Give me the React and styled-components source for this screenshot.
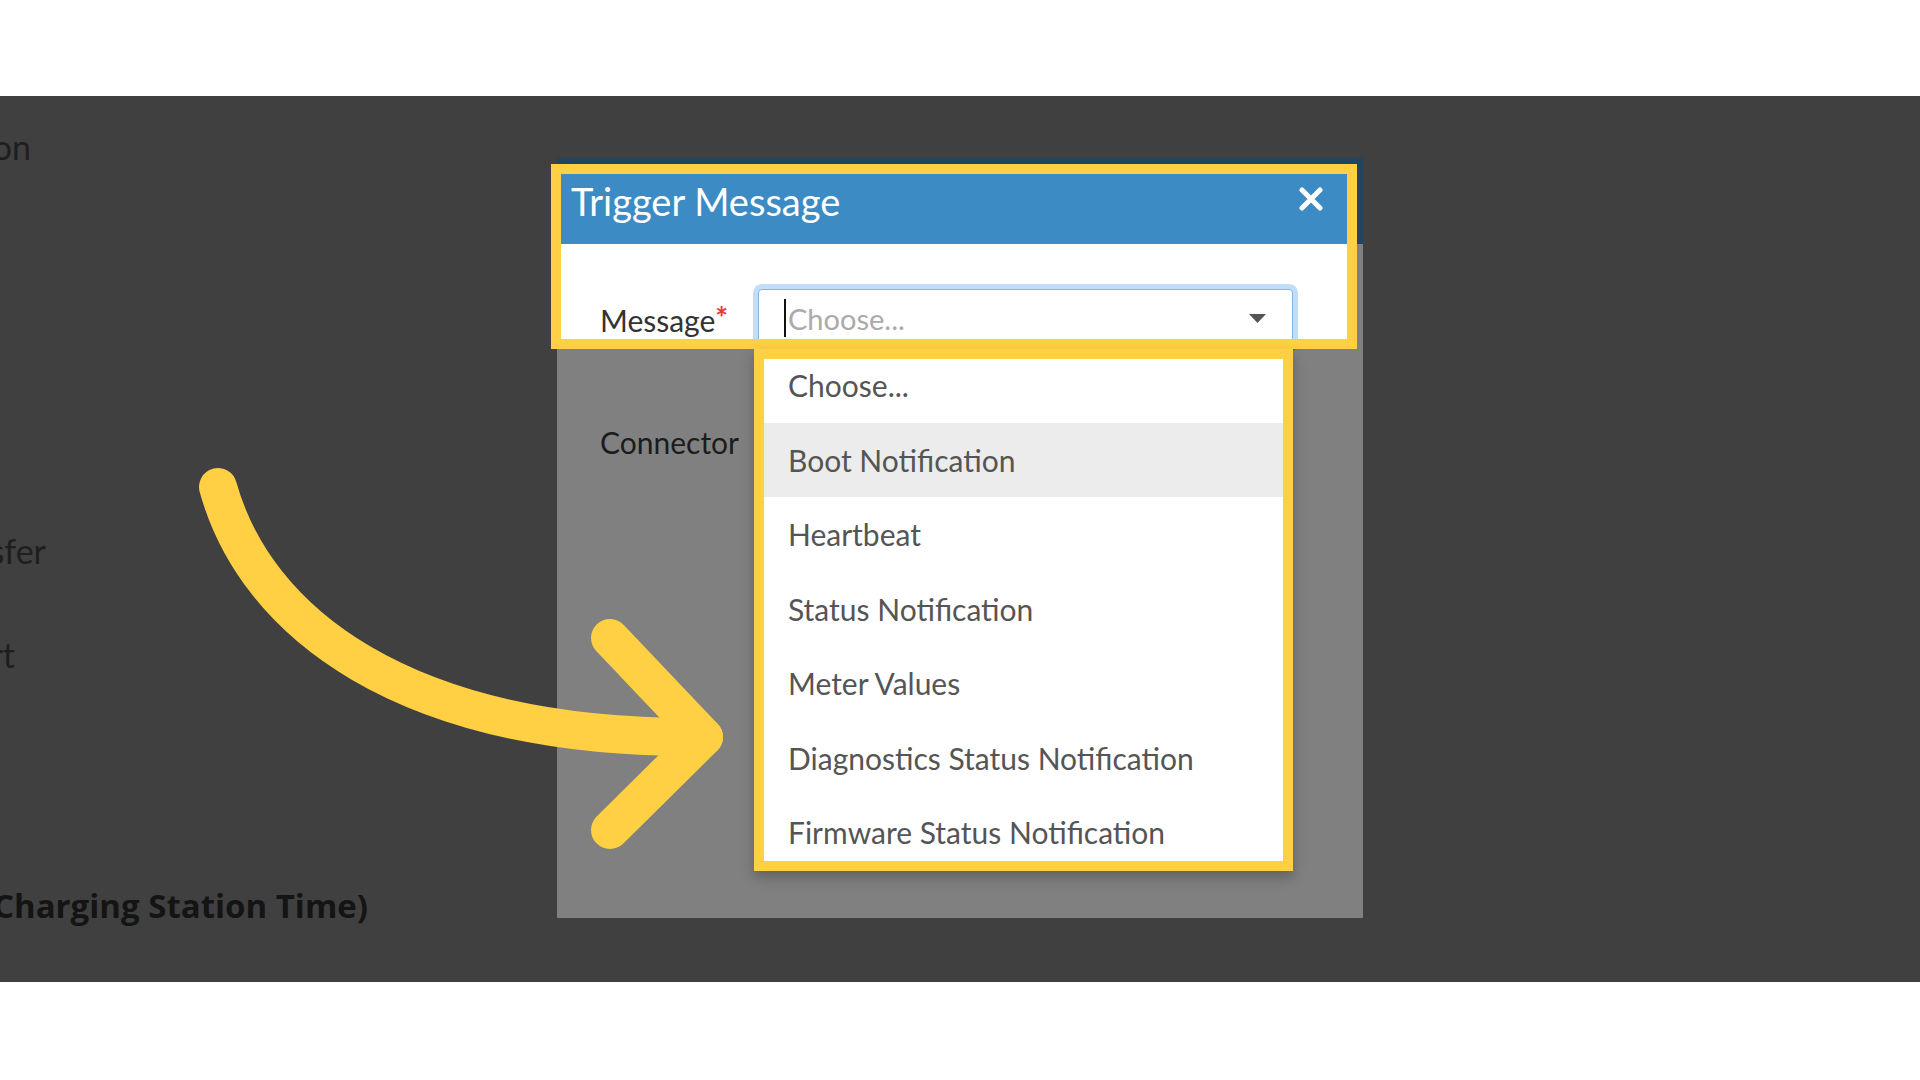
import React from "react";
import styled, { createGlobalStyle } from "styled-components";

const GlobalStyle = createGlobalStyle`
  html, body {
    margin: 0;
    padding: 0;
    background: #fff;
    overflow: hidden;
  }
  body {
    font-family: Lato, "Open Sans", sans-serif;
  }
`;

const Page = styled.div`
  width: 1920px;
  height: 1080px;
  padding-top: 96px;
  box-sizing: border-box;
  background: #fff;
`;

const Stage = styled.div`
  position: relative;
  height: 886px;
  background: #404040;
  overflow: hidden;
`;

const SideNav = styled.div`
  display: flex;
  flex-direction: column;
  padding-top: 31px;
`;

const SideItem = styled.div`
  display: flex;
  justify-content: flex-end;
  width: ${(p) => p.$end}px;
  margin-top: ${(p) => p.$gap || 0}px;
  white-space: nowrap;
  font-family: ${(p) => (p.$bold ? '"Open Sans", Lato, sans-serif' : "Lato, sans-serif")};
  font-size: ${(p) => (p.$bold ? 33 : 34)}px;
  line-height: 40px;
  font-weight: ${(p) => (p.$bold ? 700 : 400)};
  color: ${(p) => (p.$bold ? "#141414" : "#1e1e1e")};
`;

const Modal = styled.div`
  position: absolute;
  left: 557px;
  top: 62px;
  width: 806px;
  height: 760px;
  background: #808080;
`;

const Header = styled.div`
  display: flex;
  align-items: center;
  justify-content: space-between;
  height: 86px;
  padding: 0 40px 1px 14px;
  box-sizing: border-box;
  background: ${(p) => (p.$dim ? "#1f4562" : "#3d8bc5")};
`;

const Title = styled.h2`
  margin: 0;
  font-size: 38px;
  line-height: 38px;
  font-weight: 400;
  color: ${(p) => (p.$dim ? "#808080" : "#fff")};
`;

const CloseIcon = styled.svg`
  width: 24px;
  height: 24px;
  display: block;
  margin-bottom: 3px;
`;

const Body = styled.div`
  display: flex;
  flex-direction: column;
  gap: 66px;
  padding: 45px 70px 0 43px;
  background: ${(p) => (p.$dim ? "#808080" : "#fff")};
`;

const FieldRow = styled.div`
  display: flex;
  align-items: center;
  height: 58px;
`;

const Label = styled.label`
  width: 158px;
  flex: none;
  font-size: 30px;
  color: ${(p) => (p.$dim ? "#1c1c1c" : "#333")};
`;

const Required = styled.span`
  color: #e8383d;
  font-size: 30px;
  font-weight: 700;
  vertical-align: 3px;
`;

const SelectBox = styled.div`
  flex: 1;
  height: 58px;
  display: flex;
  align-items: center;
  padding: 0 25px;
  box-sizing: border-box;
  border: 1px solid ${(p) => (p.$dim ? "#475e73" : "#86b5e3")};
  border-radius: 4px;
  box-shadow: ${(p) => (p.$focus ? `0 0 0 5px ${p.$dim ? "#5f6e7c" : "#c2ddf8"}` : "none")};
  background: ${(p) => (p.$dim ? "#808080" : "#fff")};
`;

const Caret = styled.span`
  width: 2px;
  height: 38px;
  margin-right: 2px;
  background: #111;
`;

const Placeholder = styled.span`
  flex: 1;
  font-size: 29px;
  color: ${(p) => (p.$dim ? "#555" : "#aaa")};
`;

const Spotlight = styled.div`
  position: absolute;
  left: 551px;
  top: 68px;
  width: 806px;
  height: 185px;
  box-sizing: border-box;
  border: 10px solid #ffd043;
  overflow: hidden;
`;

const Clone = styled.div`
  width: 806px;
  margin: -16px 0 0 -4px;
`;

const Dropdown = styled.div`
  position: absolute;
  left: 754px;
  top: 253px;
  width: 539px;
  height: 522px;
  box-sizing: border-box;
  border: 10px solid #ffd043;
  background: #fff;
  overflow: hidden;
  box-shadow: 0 6px 12px rgba(0, 0, 0, 0.25);
`;

const OptionList = styled.ul`
  list-style: none;
  margin: -11px 0 0;
  padding: 0;
`;

const Option = styled.li`
  display: flex;
  align-items: center;
  height: 74.5px;
  padding-left: 24px;
  font-size: 30px;
  color: #555;
  background: ${(p) => (p.$active ? "#ececec" : "#fff")};
`;

const ArrowLayer = styled.svg`
  position: absolute;
  left: 0;
  top: 0;
  pointer-events: none;
`;

const options = [
  "Choose...",
  "Boot Notification",
  "Heartbeat",
  "Status Notification",
  "Meter Values",
  "Diagnostics Status Notification",
  "Firmware Status Notification",
];

const TriangleDown = ({ color }) => (
  <svg width="19" height="11" viewBox="0 0 19 11">
    <path d="M1 1 H18 L9.5 10 Z" fill={color} />
  </svg>
);

const ModalContent = ({ dim }) => (
  <>
    <Header $dim={dim}>
      <Title $dim={dim}>Trigger Message</Title>
      <CloseIcon viewBox="0 0 24 24">
        <path
          d="M3 3 L21 21 M21 3 L3 21"
          stroke={dim ? "#808080" : "#fff"}
          strokeWidth="5"
          strokeLinecap="round"
        />
      </CloseIcon>
    </Header>
    <Body $dim={dim}>
      <FieldRow>
        <Label $dim={dim}>
          Message<Required>*</Required>
        </Label>
        <SelectBox $dim={dim} $focus>
          <Caret />
          <Placeholder $dim={dim}>Choose...</Placeholder>
          <TriangleDown color={dim ? "#2a2a2a" : "#555"} />
        </SelectBox>
      </FieldRow>
      <FieldRow>
        <Label $dim={dim}>Connector</Label>
        <SelectBox $dim={dim}>
          <Placeholder $dim={dim}>Choose...</Placeholder>
        </SelectBox>
      </FieldRow>
    </Body>
  </>
);

export default function App() {
  return (
    <Page>
      <GlobalStyle />
      <Stage>
        <SideNav>
          <SideItem $end={31}>Get Configuration</SideItem>
          <SideItem $end={46} $gap={364}>
            Data Transfer
          </SideItem>
          <SideItem $end={15} $gap={64}>
            Remote Start
          </SideItem>
          <SideItem $end={368} $gap={211} $bold>
            Set Time (Charging Station Time)
          </SideItem>
        </SideNav>

        <Modal>
          <ModalContent dim />
        </Modal>

        <Spotlight>
          <Clone>
            <ModalContent />
          </Clone>
        </Spotlight>

        <Dropdown>
          <OptionList>
            {options.map((o, i) => (
              <Option key={o} $active={i === 1}>
                {o}
              </Option>
            ))}
          </OptionList>
        </Dropdown>

        <ArrowLayer width="1920" height="886" viewBox="0 0 1920 886">
          <path
            d="M218 391 C 255 524, 400 644, 704 641"
            fill="none"
            stroke="#ffd043"
            strokeWidth="38"
            strokeLinecap="round"
          />
          <path
            d="M610 542 L704 641 L610 734"
            fill="none"
            stroke="#ffd043"
            strokeWidth="38"
            strokeLinecap="round"
            strokeLinejoin="round"
          />
        </ArrowLayer>
      </Stage>
    </Page>
  );
}
